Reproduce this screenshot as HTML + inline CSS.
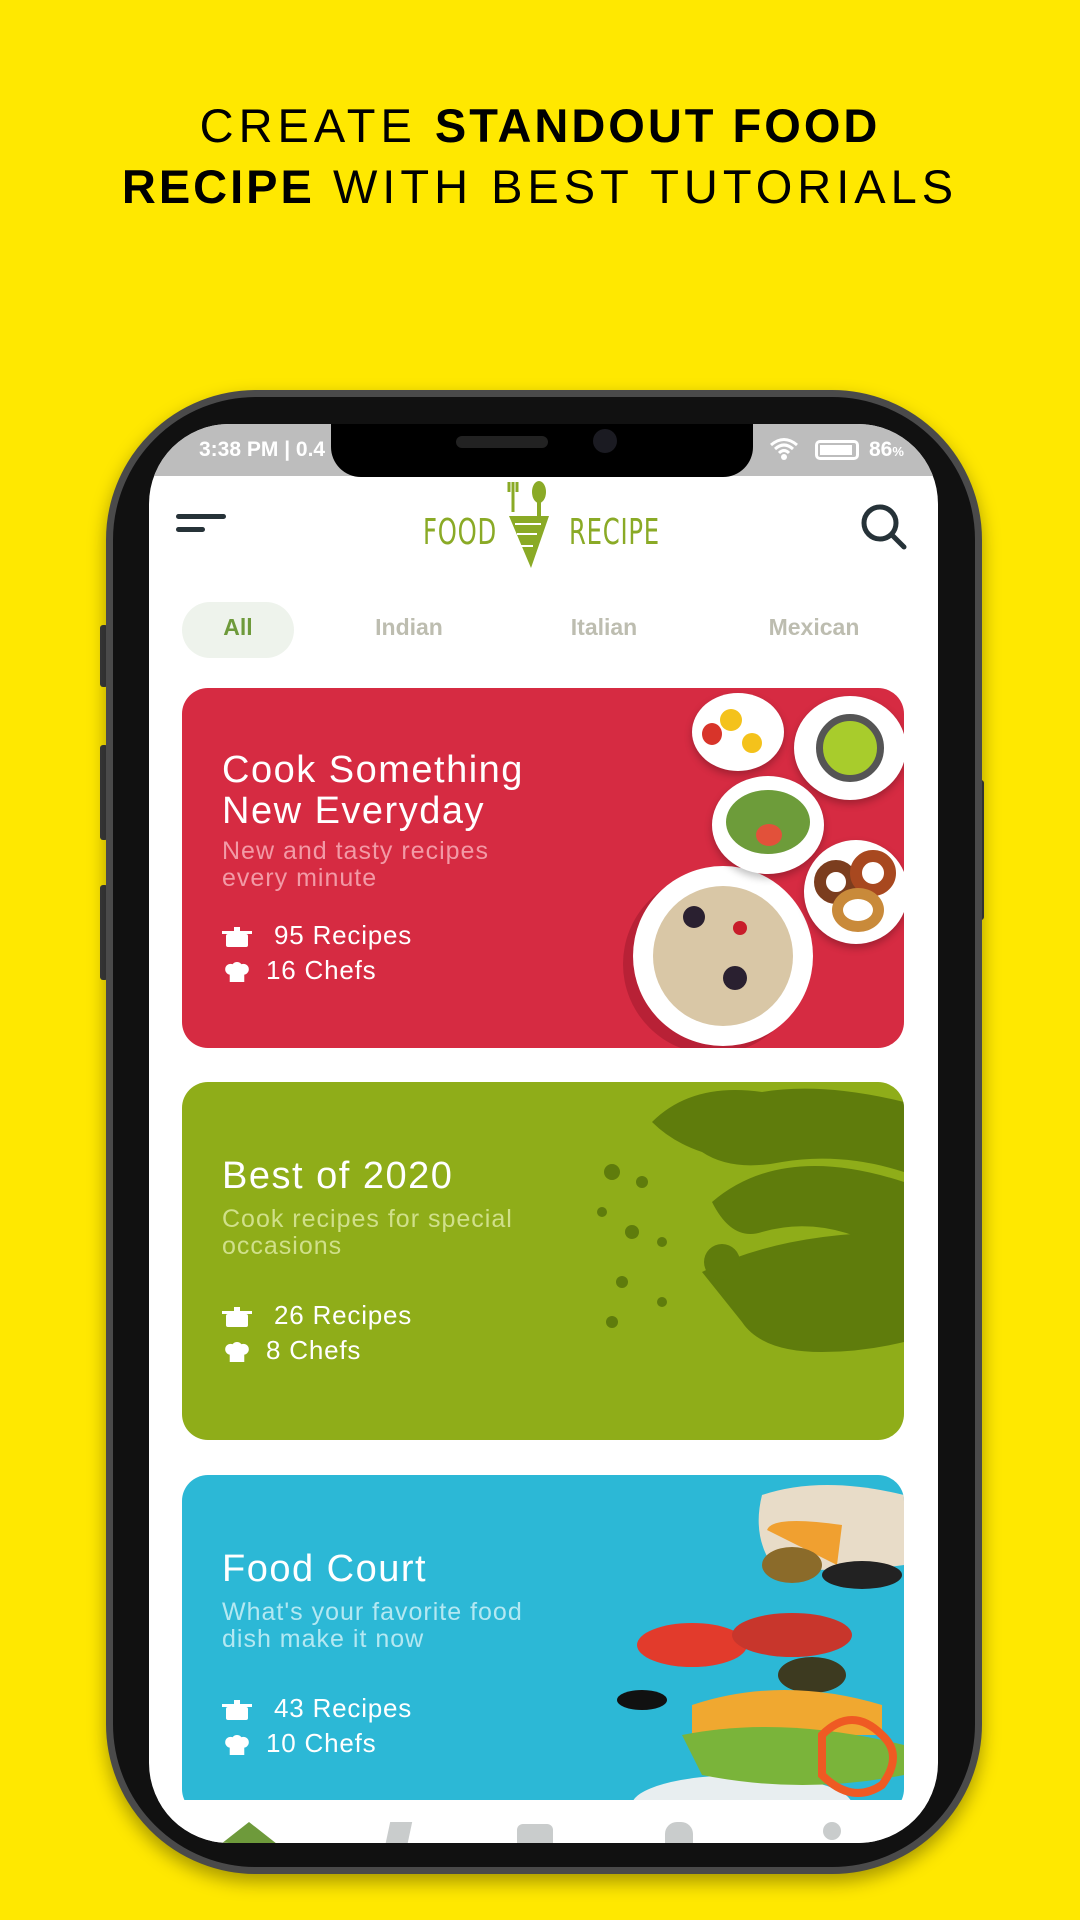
<!DOCTYPE html>
<html><head><meta charset="utf-8">
<style>
*{margin:0;padding:0;box-sizing:border-box}
body{width:1080px;height:1920px;background:#ffe800;position:relative;overflow:hidden;font-family:"Liberation Sans",sans-serif}
.head{position:absolute;left:0;width:1080px;text-align:center;font-size:47px;color:#000;line-height:60px;letter-spacing:5px}
.head b{font-weight:bold;letter-spacing:3px}
.phone{position:absolute;left:106px;top:390px;width:876px;height:1484px;border-radius:150px;background:#111;border:7px solid #4a4a4a;box-shadow:0 8px 18px rgba(0,0,0,.35)}
.btn{position:absolute;background:#3a3a3a;width:8px;border-radius:3px}
.screen{position:absolute;left:149px;top:424px;width:789px;height:1419px;border-radius:80px;background:#fff;overflow:hidden}
.status{position:absolute;left:0;top:0;width:100%;height:52px;background:#bdbdbd;color:#fff;font-size:21px;font-weight:bold}
.notch{position:absolute;left:182px;top:-2px;width:422px;height:55px;background:#000;border-radius:0 0 30px 30px}
.card{position:absolute;left:33px;width:722px;border-radius:26px;overflow:hidden;color:#fff}
.card h2{position:absolute;left:40px;font-weight:normal;font-size:38px;line-height:41px;letter-spacing:1.5px;white-space:nowrap}
.card p{position:absolute;left:40px;font-size:25px;line-height:27px;letter-spacing:1px;white-space:nowrap}
.card .st{position:absolute;left:40px;font-size:26px;line-height:35px;letter-spacing:.8px}
.ic{display:inline-block;width:30px;height:20px;vertical-align:middle;margin-right:14px}
.tab{position:absolute;top:190px;font-size:23px;font-weight:bold;color:#bdbdb0;text-align:center}
.plate{position:absolute;border-radius:50%;background:#fff;box-shadow:0 4px 8px rgba(0,0,0,.25)}
</style></head><body>
<div class="head" style="top:96px">CREATE <b>STANDOUT FOOD</b></div>
<div class="head" style="top:157px"><b>RECIPE</b> WITH BEST TUTORIALS</div>

<div class="btn" style="left:100px;top:625px;height:62px"></div>
<div class="btn" style="left:100px;top:745px;height:95px"></div>
<div class="btn" style="left:100px;top:885px;height:95px"></div>
<div class="btn" style="left:976px;top:780px;height:140px"></div>
<div class="phone"></div>

<div class="screen">
 <div class="status">
  <span style="position:absolute;left:50px;top:14px">3:38 PM | 0.4</span>
  <span style="position:absolute;left:620px;top:12px">
   <svg width="30" height="26" viewBox="0 0 30 26"><path d="M2 9Q15-2 28 9M6 13Q15 5 24 13M10 17Q15 12 20 17" stroke="#fff" stroke-width="3" fill="none"/><circle cx="15" cy="21" r="3" fill="#fff"/></svg></span>
  <span style="position:absolute;left:666px;top:16px;width:44px;height:20px;border:3px solid #fff;border-radius:5px"><span style="position:absolute;left:2px;top:2px;width:32px;height:10px;background:#fff"></span></span>
  <span style="position:absolute;left:720px;top:14px">86<small style="font-size:13px">%</small></span>
  <div class="notch"><div style="position:absolute;left:125px;top:14px;width:92px;height:12px;border-radius:6px;background:#222"></div><div style="position:absolute;left:262px;top:7px;width:24px;height:24px;border-radius:50%;background:#1b1b22"></div></div>
 </div>
 <div style="position:absolute;left:27px;top:90px;width:50px;height:5px;border-radius:3px;background:#263238"></div>
 <div style="position:absolute;left:27px;top:103px;width:29px;height:5px;border-radius:3px;background:#263238"></div>
 <svg style="position:absolute;left:710px;top:78px" width="50" height="50" viewBox="0 0 50 50"><circle cx="21" cy="21" r="16" stroke="#263238" stroke-width="5" fill="none"/><path d="M33 33L45 45" stroke="#263238" stroke-width="5" stroke-linecap="round"/></svg>
 <div style="position:absolute;left:274px;top:88px;color:#8aaa26;font-family:'DejaVu Sans Condensed','Liberation Sans Narrow',sans-serif;font-size:36px;letter-spacing:1px;transform:scaleX(.75);transform-origin:left">FOOD</div>
 <div style="position:absolute;left:420px;top:88px;color:#8aaa26;font-family:'DejaVu Sans Condensed','Liberation Sans Narrow',sans-serif;font-size:36px;letter-spacing:1px;transform:scaleX(.75);transform-origin:left">RECIPE</div>
 <svg style="position:absolute;left:354px;top:54px" width="52" height="92" viewBox="0 0 52 92"><path d="M6 38L46 38L28 90Z" fill="#8aaa26"/><path d="M12 46L38 46M14 56L34 56M18 68L30 68" stroke="#fff" stroke-width="2"/><path d="M10 4L10 34M6 4L6 14M14 4L14 14" stroke="#8aaa26" stroke-width="3"/><ellipse cx="36" cy="14" rx="7" ry="11" fill="#8aaa26"/><path d="M36 22L36 38" stroke="#8aaa26" stroke-width="4"/></svg>
 <div style="position:absolute;left:33px;top:178px;width:112px;height:56px;border-radius:28px;background:#eef3ec"></div>
 <div class="tab" style="left:33px;width:112px;color:#6e9a3b">All</div>
 <div class="tab" style="left:200px;width:120px">Indian</div>
 <div class="tab" style="left:395px;width:120px">Italian</div>
 <div class="tab" style="left:590px;width:150px">Mexican</div>

 <div class="card" style="top:264px;height:360px;background:#d62b42">
  <h2 style="top:62px">Cook Something<br>New Everyday</h2>
  <p style="top:150px;color:#f29aa6">New and tasty recipes<br>every minute</p>
  <div class="st" style="top:230px"><svg class="ic" viewBox="0 0 30 20"><rect x="0" y="4" width="30" height="3" fill="#fff"/><rect x="4" y="7" width="22" height="13" rx="2" fill="#fff"/><rect x="12" y="0" width="6" height="4" fill="#fff"/></svg> 95 Recipes</div>
  <div class="st" style="top:265px"><svg class="ic" viewBox="0 0 30 22"><circle cx="8" cy="8" r="6" fill="#fff"/><circle cx="15" cy="6" r="6" fill="#fff"/><circle cx="22" cy="8" r="6" fill="#fff"/><rect x="7" y="10" width="16" height="12" fill="#fff"/></svg>16 Chefs</div>
  <div class="plate" style="left:451px;top:178px;width:180px;height:180px;background:#fff;box-shadow:-10px 8px 0 #b82136"><div style="position:absolute;left:20px;top:20px;width:140px;height:140px;border-radius:50%;background:#d9c7a6"></div><div style="position:absolute;left:50px;top:40px;width:22px;height:22px;border-radius:50%;background:#2a2030"></div><div style="position:absolute;left:90px;top:100px;width:24px;height:24px;border-radius:50%;background:#2a2030"></div><div style="position:absolute;left:100px;top:55px;width:14px;height:14px;border-radius:50%;background:#c81d2a"></div></div>
  <div class="plate" style="left:510px;top:5px;width:92px;height:78px"><div style="position:absolute;left:28px;top:16px;width:22px;height:22px;border-radius:50%;background:#f4c21b"></div><div style="position:absolute;left:50px;top:40px;width:20px;height:20px;border-radius:50%;background:#f4c21b"></div><div style="position:absolute;left:10px;top:30px;width:20px;height:22px;border-radius:50%;background:#d8342a"></div></div>
  <div class="plate" style="left:612px;top:8px;width:112px;height:104px"><div style="position:absolute;left:22px;top:18px;width:68px;height:68px;border-radius:50%;background:#a8cc2c;border:7px solid #555"></div></div>
  <div class="plate" style="left:530px;top:88px;width:112px;height:98px"><div style="position:absolute;left:14px;top:14px;width:84px;height:64px;border-radius:50%;background:#6d9c3a"></div><div style="position:absolute;left:44px;top:48px;width:26px;height:22px;border-radius:50%;background:#e2513a"></div></div>
  <div class="plate" style="left:622px;top:152px;width:104px;height:104px"><div style="position:absolute;left:10px;top:20px;width:44px;height:44px;border-radius:50%;border:12px solid #7b3d1e"></div><div style="position:absolute;left:46px;top:10px;width:46px;height:46px;border-radius:50%;border:12px solid #a8481f"></div><div style="position:absolute;left:28px;top:48px;width:52px;height:44px;border-radius:50%;border:11px solid #c98a3a"></div></div>
 </div>

 <div class="card" style="top:658px;height:358px;background:#8fad19">
  <h2 style="top:74px">Best of 2020</h2>
  <p style="top:124px;color:#d0e08a">Cook recipes for special<br>occasions</p>
  <div class="st" style="top:216px"><svg class="ic" viewBox="0 0 30 20"><rect x="0" y="4" width="30" height="3" fill="#fff"/><rect x="4" y="7" width="22" height="13" rx="2" fill="#fff"/><rect x="12" y="0" width="6" height="4" fill="#fff"/></svg> 26 Recipes</div>
  <div class="st" style="top:251px"><svg class="ic" viewBox="0 0 30 22"><circle cx="8" cy="8" r="6" fill="#fff"/><circle cx="15" cy="6" r="6" fill="#fff"/><circle cx="22" cy="8" r="6" fill="#fff"/><rect x="7" y="10" width="16" height="12" fill="#fff"/></svg>8 Chefs</div>
  <svg style="position:absolute;left:400px;top:0" width="322" height="358" viewBox="0 0 322 358"><path d="M70 40Q110 0 180 10Q240 0 322 20L322 90Q260 70 200 80Q150 90 120 70Q90 60 70 40Z" fill="#5f7c0c"/><path d="M130 120Q200 60 322 100L322 180Q250 130 180 150Q150 160 130 120Z" fill="#5f7c0c"/><path d="M120 190Q200 150 322 150L322 260Q280 270 240 270Q180 270 160 240Q140 215 120 190Z" fill="#5f7c0c"/><circle cx="140" cy="180" r="18" fill="#5f7c0c"/><circle cx="30" cy="90" r="8" fill="#5f7c0c"/><circle cx="60" cy="100" r="6" fill="#5f7c0c"/><circle cx="20" cy="130" r="5" fill="#5f7c0c"/><circle cx="50" cy="150" r="7" fill="#5f7c0c"/><circle cx="80" cy="160" r="5" fill="#5f7c0c"/><circle cx="40" cy="200" r="6" fill="#5f7c0c"/><circle cx="80" cy="220" r="5" fill="#5f7c0c"/><circle cx="30" cy="240" r="6" fill="#5f7c0c"/></svg>
 </div>

 <div class="card" style="top:1051px;height:340px;background:#2cb8d6">
  <h2 style="top:74px">Food Court</h2>
  <p style="top:124px;color:#b4e8f2">What's your favorite food<br>dish make it now</p>
  <div class="st" style="top:216px"><svg class="ic" viewBox="0 0 30 20"><rect x="0" y="4" width="30" height="3" fill="#fff"/><rect x="4" y="7" width="22" height="13" rx="2" fill="#fff"/><rect x="12" y="0" width="6" height="4" fill="#fff"/></svg> 43 Recipes</div>
  <div class="st" style="top:251px"><svg class="ic" viewBox="0 0 30 22"><circle cx="8" cy="8" r="6" fill="#fff"/><circle cx="15" cy="6" r="6" fill="#fff"/><circle cx="22" cy="8" r="6" fill="#fff"/><rect x="7" y="10" width="16" height="12" fill="#fff"/></svg>10 Chefs</div>
  <svg style="position:absolute;left:400px;top:0" width="322" height="340" viewBox="0 0 322 340"><ellipse cx="160" cy="330" rx="110" ry="30" fill="#e8eef0"/><path d="M180 20Q240 0 322 20L322 90Q250 100 190 90Q170 60 180 20Z" fill="#e8dcc8"/><path d="M185 55Q190 40 260 50L255 90Z" fill="#f0a030"/><ellipse cx="210" cy="90" rx="30" ry="18" fill="#8b6b2a"/><ellipse cx="280" cy="100" rx="40" ry="14" fill="#222"/><ellipse cx="110" cy="170" rx="55" ry="22" fill="#e23b2c"/><ellipse cx="210" cy="160" rx="60" ry="22" fill="#c8362c"/><ellipse cx="230" cy="200" rx="34" ry="18" fill="#3d3a20"/><ellipse cx="60" cy="225" rx="25" ry="10" fill="#111"/><path d="M110 230Q200 200 300 230L300 260L110 260Z" fill="#f0a830"/><path d="M100 260Q200 240 322 270L322 300Q220 320 120 300Z" fill="#7ab43a"/><path d="M240 260Q270 230 300 260Q322 280 300 310Q270 330 240 300Z" fill="none" stroke="#ef5a23" stroke-width="8"/></svg>
 </div>

 <div style="position:absolute;left:0;top:1376px;width:100%;height:43px;background:#fff"></div>
 <div style="position:absolute;left:72px;top:1398px;width:0;height:0;border-left:28px solid transparent;border-right:28px solid transparent;border-bottom:22px solid #6e9a3b"></div>
 <div style="position:absolute;left:238px;top:1398px;width:22px;height:30px;background:#c9cccc;transform:skewX(-12deg)"></div>
 <div style="position:absolute;left:368px;top:1400px;width:36px;height:30px;background:#c9cccc;border-radius:6px"></div>
 <div style="position:absolute;left:516px;top:1398px;width:28px;height:30px;background:#c9cccc;border-radius:12px 12px 0 0"></div>
 <div style="position:absolute;left:674px;top:1398px;width:18px;height:18px;background:#c9cccc;border-radius:50%"></div>
</div>
</body></html>
